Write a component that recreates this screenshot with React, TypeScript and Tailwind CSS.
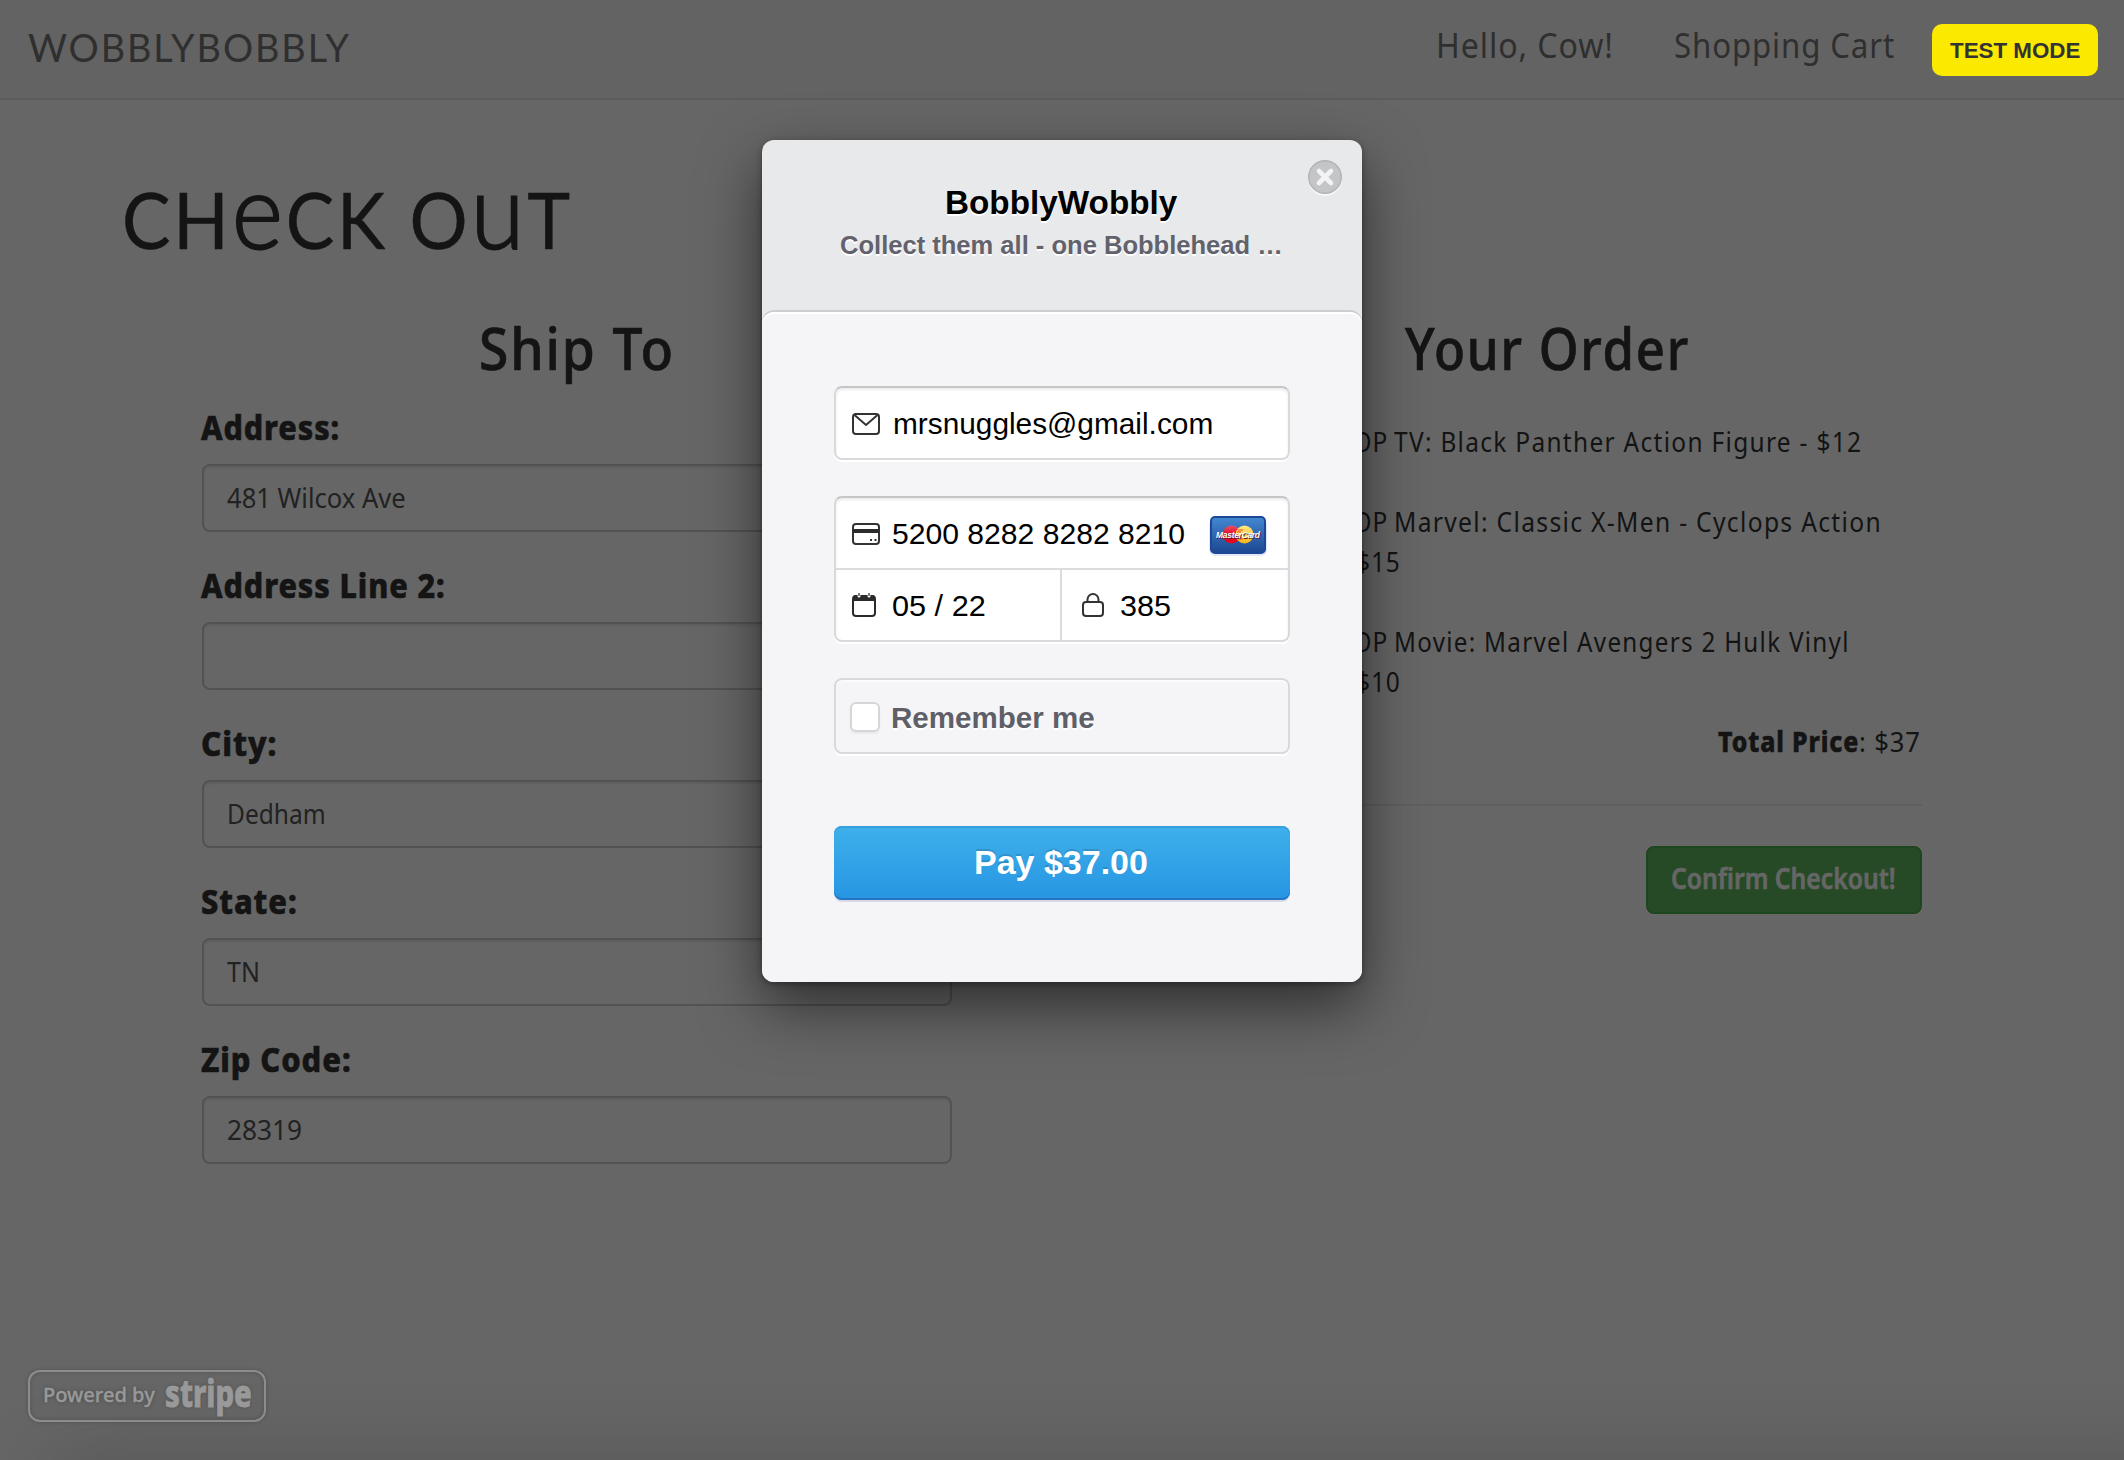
import { useLayoutEffect, useRef, useState, type ReactNode } from 'react';

/* Text run whose glyphs are condensed or widened to span exactly `w` pixels. */
function Fit({ w, className = '', children }: { w: number; className?: string; children: ReactNode }) {
  const ref = useRef<HTMLSpanElement>(null);
  const [s, setS] = useState(1);
  useLayoutEffect(() => {
    const measure = () => {
      if (ref.current) setS(w / ref.current.offsetWidth);
    };
    measure();
    document.fonts?.ready.then(measure);
  }, [w]);
  return (
    <span className="inline-block shrink-0 text-left whitespace-nowrap" style={{ width: w }}>
      <span ref={ref} className={`inline-block origin-left ${className}`} style={{ transform: `scaleX(${s})` }}>
        {children}
      </span>
    </span>
  );
}

const fields = [
  { label: 'Address:', lw: 139, value: '481 Wilcox Ave', vw: 179 },
  { label: 'Address Line 2:', lw: 245, value: '', vw: 0 },
  { label: 'City:', lw: 76, value: 'Dedham', vw: 99 },
  { label: 'State:', lw: 97, value: 'TN', vw: 33 },
  { label: 'Zip Code:', lw: 151, value: '28319', vw: 75 },
];

const items = [
  { text: 'TV: Black Panther Action Figure - $12', w: 468, rest: '' },
  { text: 'Marvel: Classic X-Men - Cyclops Action', w: 488, rest: 'Figure - $15' },
  { text: 'Movie: Marvel Avengers 2 Hulk Vinyl', w: 456, rest: 'Figure - $10' },
];

function MailIcon() {
  return (
    <svg className="mt-[2px]" width="28" height="22" viewBox="0 0 28 22" fill="none" stroke="#333" strokeWidth="2">
      <rect x="1" y="1" width="26" height="20" rx="3" />
      <path d="M2.500 2 L14 12 L25.500 2" />
    </svg>
  );
}

function CardIcon() {
  return (
    <svg className="mt-[2px]" width="28" height="22" viewBox="0 0 28 22" fill="none">
      <rect x="1" y="1" width="26" height="20" rx="3" stroke="#333" strokeWidth="2" />
      <path d="M1 6h26v4H1z" fill="#2b2b2b" />
      <path d="M18 16h2v2h-2zM22.500 16h2v2h-2z" fill="#333" />
    </svg>
  );
}

function CalendarIcon() {
  return (
    <svg width="24" height="24" viewBox="0 0 24 24" fill="none">
      <rect x="1" y="3" width="22" height="20" rx="3" stroke="#2b2b2b" strokeWidth="2" />
      <path d="M1 8V5a3 3 0 0 1 3-3h16a3 3 0 0 1 3 3v3z" fill="#2b2b2b" />
      <path d="M5.500 0h3v3a1.500 1.500 0 0 1-3 0zM15.500 0h3v3a1.500 1.500 0 0 1-3 0z" fill="#fff" />
      <path d="M6.400 0h1.200v3H6.400zM16.400 0h1.200v3h-1.200z" fill="#2b2b2b" />
    </svg>
  );
}

function LockIcon() {
  return (
    <svg width="22" height="24" viewBox="0 0 22 24" fill="none" stroke="#333" strokeWidth="2">
      <rect x="1" y="9" width="20" height="14" rx="3" />
      <path d="M5.500 9V6.500a5.500 5.500 0 0 1 11 0V9" />
    </svg>
  );
}

function MasterCard() {
  return (
    <svg width="56" height="38" viewBox="0 0 56 38" className="block overflow-visible">
      <defs>
        <linearGradient id="mcBlue" x1="0" y1="0" x2="0" y2="1">
          <stop offset="0" stopColor="#4488d2" />
          <stop offset="1" stopColor="#1c4690" />
        </linearGradient>
        <linearGradient id="mcRed" x1="0" y1="0" x2="0" y2="1">
          <stop offset="0" stopColor="#f0506a" />
          <stop offset="0.5" stopColor="#e00a20" />
          <stop offset="1" stopColor="#e8001c" />
        </linearGradient>
        <linearGradient id="mcYellow" x1="0" y1="0" x2="0" y2="1">
          <stop offset="0" stopColor="#ffe680" />
          <stop offset="1" stopColor="#fdb813" />
        </linearGradient>
      </defs>
      <rect x="-1" y="3" width="58" height="37" rx="6" fill="#1c4690" opacity="0.12" />
      <rect x="1" y="1" width="54" height="36" rx="4" fill="url(#mcBlue)" stroke="#1d4797" strokeWidth="2" />
      <circle cx="21.500" cy="18.500" r="9" fill="url(#mcRed)" />
      <circle cx="34.500" cy="18.500" r="9" fill="url(#mcYellow)" />
      <path d="M28 14h5M27 16h4M27 21h4M28 23h5" stroke="#e8501c" strokeWidth="1" />
      <text
        x="6"
        y="22"
        fontSize="8.500"
        fontWeight="700"
        fontStyle="italic"
        fontFamily="Liberation Sans, sans-serif"
        fill="#fff"
        className="[text-shadow:1px_1px_0_#5a1a30] tracking-[-0.300px]"
      >
        MasterCard
      </text>
    </svg>
  );
}

function Page() {
  return (
    <div className="h-[1460px] w-[2124px] bg-white font-['Noto_Sans',sans-serif] text-[#333]">
      <nav className="flex h-[100px] items-start border-b-2 border-[#e7e7e7] bg-[#f8f8f8] pl-7 text-[#777]">
        <div className="font-['Lato',sans-serif] text-[39px] leading-[95px]">
          <Fit w={323} className="tracking-[2px]">WOBBLYBOBBLY</Fit>
        </div>
        <div className="ml-[1085px] flex gap-[60px] text-[35px] leading-[90px]">
          <Fit w={178} className="tracking-[1px]">Hello, Cow!</Fit>
          <Fit w={221} className="tracking-[1px]">Shopping Cart</Fit>
        </div>
      </nav>
      <h1 className="mt-[79px] ml-[122px] h-20 font-['Lato',sans-serif] text-[77px] leading-[80px] [-webkit-text-stroke:0.500px_#333]">
        <Fit w={451} className="tracking-[3px]">
          CH<span className="text-[104px] leading-[0] font-light [-webkit-text-stroke:2px_#333]">e</span>CK O<span className="text-[104px] leading-[0] font-light [-webkit-text-stroke:2px_#333]">u</span>T
        </Fit>
      </h1>
      <div className="mt-[57px] ml-[202px] flex w-[1720px] justify-between">
        <section className="w-[750px]">
          <h2 className="text-center text-[58px] leading-[64px] font-medium [-webkit-text-stroke:0.700px_#333]">
            <Fit w={196} className="tracking-[2px]">Ship To</Fit>
          </h2>
          <form className="mt-[27px] flex flex-col gap-[33px]">
            {fields.map((f) => (
              <label key={f.label} className="flex flex-col gap-[17px]">
                <span className="-ml-[1px] h-10 text-[34px] leading-[40px] font-extrabold [-webkit-text-stroke:0.600px_#333]">
                  <Fit w={f.lw} className="tracking-[1px]">{f.label}</Fit>
                </span>
                <span className="block h-[68px] rounded-lg border-2 border-[#ccc] bg-white pl-[23px] text-[28px] leading-[63px] text-[#555] shadow-[inset_0_2px_2px_rgba(0,0,0,0.075)]">
                  {f.value && <Fit w={f.vw}>{f.value}</Fit>}
                </span>
              </label>
            ))}
          </form>
        </section>
        <section className="w-[752px]">
          <h2 className="pl-[2px] text-center text-[58px] leading-[64px] font-medium [-webkit-text-stroke:0.700px_#333]">
            <Fit w={285} className="tracking-[2px]">Your Order</Fit>
          </h2>
          <ul className="mt-[41px] flex flex-col gap-10 pl-[85px] text-[28px] leading-[40px]">
            {items.map((i) => (
              <li key={i.text}>
                <div className="flex h-10 gap-[6px]">
                  <Fit w={133} className="tracking-[1px]">Funko POP</Fit>
                  <Fit w={i.w} className="tracking-[1.500px]">{i.text}</Fit>
                </div>
                {i.rest && (
                  <div className="h-10">
                    <Fit w={146} className="tracking-[1px]">{i.rest}</Fit>
                  </div>
                )}
              </li>
            ))}
          </ul>
          <p className="mt-5 flex h-10 justify-end pr-[1px] text-[28px] leading-[40px]">
            <Fit w={141} className="font-extrabold tracking-[1px] [-webkit-text-stroke:0.500px_#333]">Total Price</Fit>
            <Fit w={62} className="tracking-[1px]">: $37</Fit>
          </p>
          <hr className="mt-[43px] border-t-2 border-[#eee]" />
          <div className="mt-10 flex justify-end">
            <button className="flex h-[68px] w-[276px] items-start justify-center rounded-lg border-2 border-[#4cae4c] bg-[#5cb85c] pr-[2px] text-[28px] leading-[60px] font-semibold text-white [-webkit-text-stroke:0.500px_#fff]">
              <Fit w={225}>Confirm Checkout!</Fit>
            </button>
          </div>
        </section>
      </div>
    </div>
  );
}

function Modal() {
  return (
    <div className="relative h-[842px] w-[600px] rounded-xl bg-[#e8e9eb] font-['Liberation_Sans',Arial,sans-serif] shadow-[0_24px_60px_rgba(0,0,0,0.55),0_2px_6px_rgba(0,0,0,0.35)]">
      <header className="flex h-[172px] flex-col items-center pt-[42px]">
        <h3 className="h-10 pr-[2px] text-[34px] leading-[40px] font-bold text-black [text-shadow:0_2px_0_#fff]">
          <Fit w={232}>BobblyWobbly</Fit>
        </h3>
        <p className="mt-[7px] h-8 pr-[2px] text-[26px] leading-[32px] font-bold text-[#62626c] [text-shadow:0_2px_0_#fff]">
          <Fit w={443}>Collect them all - one Bobblehead …</Fit>
        </p>
      </header>
      <svg className="absolute top-[19px] right-[19px]" width="36" height="38" viewBox="0 0 36 38" fill="none">
        <circle cx="18" cy="20" r="17" fill="#f6f6f7" />
        <circle cx="18" cy="18" r="16.300" fill="#c4c5c7" stroke="#b2b3b5" strokeWidth="1.400" />
        <path d="M12 12l12 12M24 12l-12 12" stroke="#f3f3f4" strokeWidth="4.600" strokeLinecap="round" />
      </svg>
      <div className="h-[670px] rounded-xl bg-[#f5f5f7] px-[72px] pt-[74px] text-[30px] text-black shadow-[0_-2px_0_#cdced0,inset_0_2px_0_#fff]">
        <div className="flex h-[74px] items-center rounded-lg border-2 border-[#d9d9db] border-t-[#c6c6c8] bg-white pl-4 leading-[70px] shadow-[inset_0_2px_3px_rgba(0,0,0,0.08),0_2px_0_#fff]">
          <MailIcon />
          <span className="ml-[13px] h-[69px]"><Fit w={320}>mrsnuggles@gmail.com</Fit></span>
        </div>
        <div className="mt-9 h-[146px] rounded-lg border-2 border-[#d9d9db] border-t-[#c6c6c8] bg-white leading-[70px] shadow-[inset_0_2px_3px_rgba(0,0,0,0.08),0_2px_0_#fff]">
          <div className="flex h-[72px] items-center border-b-2 border-[#dcdcde] pl-4">
            <CardIcon />
            <span className="ml-[12px] h-[69px]"><Fit w={293}>5200 8282 8282 8210</Fit></span>
            <span className="ml-[25px] pt-1"><MasterCard /></span>
          </div>
          <div className="flex h-[70px]">
            <div className="flex w-[226px] items-center border-r-2 border-[#dcdcde] pl-4">
              <CalendarIcon />
              <span className="ml-[16px] h-[68px]"><Fit w={94}>05 / 22</Fit></span>
            </div>
            <div className="flex items-center pl-5">
              <LockIcon />
              <span className="ml-[16px] h-[68px]"><Fit w={51}>385</Fit></span>
            </div>
          </div>
        </div>
        <div className="mt-9 flex h-[76px] items-center rounded-lg border-2 border-[#d9d9db] pl-[14px] leading-[72px] font-bold text-[#5f5f69] shadow-[inset_0_2px_0_#fbfbfc,0_2px_0_#fff]">
          <span className="mt-[2px] h-[30px] w-[30px] rounded-md border-2 border-[#d6d6d8] bg-white shadow-[0_2px_2px_rgba(0,0,0,0.05)]" />
          <span className="ml-[11px] h-[69px] [text-shadow:0_2px_0_#fff]"><Fit w={204}>Remember me</Fit></span>
        </div>
        <button className="mt-[72px] flex h-[74px] w-full justify-center rounded-lg bg-linear-to-b from-[#3eb0ea] to-[#2795e3] pr-[2px] text-[34px] leading-[72px] font-bold text-white shadow-[inset_0_2px_0_#369fde,inset_0_-2px_0_#2675c4,0_2px_0_#d5dae6] [text-shadow:0_-2px_0_rgba(0,0,0,0.15)]">
          <Fit w={174}>Pay $37.00</Fit>
        </button>
      </div>
    </div>
  );
}

export default function App() {
  return (
    <div className="relative h-[1460px] w-[2124px] overflow-hidden">
      <Page />
      <div className="absolute inset-0 flex justify-center bg-black/60 pt-[140px]">
        <Modal />
      </div>
      <div className="absolute -right-20 -bottom-[60px] left-12 h-[60px] shadow-[0_0_80px_rgba(0,0,0,0.18)]" />
      <div className="absolute top-6 right-[26px] flex h-[52px] w-[166px] justify-center rounded-[10px] bg-[#fbe900] font-['Liberation_Sans',Arial,sans-serif] text-[22px] leading-[53px] font-bold text-[#333]">
        <Fit w={130}>TEST MODE</Fit>
      </div>
      <div className="absolute bottom-[38px] left-7 flex h-[52px] w-[238px] rounded-xl border-2 border-[#8c8c8c] pl-[13px] font-['Noto_Sans',sans-serif] text-[#999] shadow-[0_0_4px_rgba(0,0,0,0.2),inset_0_0_4px_rgba(0,0,0,0.2)] [text-shadow:0_0_4px_rgba(0,0,0,0.3)]">
        <span className="text-[19px] leading-[47px] font-medium [-webkit-text-stroke:0.300px_#999]"><Fit w={112}>Powered by</Fit></span>
        <span className="ml-[10px] text-[38px] leading-[41px] font-extrabold [-webkit-text-stroke:1px_#999]"><Fit w={87}>stripe</Fit></span>
      </div>
    </div>
  );
}
